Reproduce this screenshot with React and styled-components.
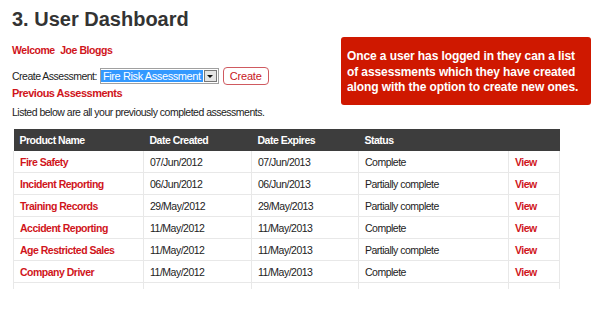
import React from 'react';
import styled, {createGlobalStyle} from 'styled-components';

const GlobalStyle = createGlobalStyle`
  body {
    margin: 0;
    background: #fff;
    font-family: "Liberation Sans", Arial, sans-serif;
    color: #222;
  }
`

const Page = styled.div`
  width: 600px;
  height: 330px;
  overflow: hidden;
  padding: 6px 0 0 12px;
  box-sizing: border-box;
`

const Title = styled.h1`
  margin: 0;
  font-size: 20px;
  font-weight: bold;
  color: #333;
  line-height: 26px;
`

const Top = styled.div`
  display: flex;
  justify-content: space-between;
  width: 579px;
`

const Left = styled.div`
  padding-top: 12px;
`

const Welcome = styled.div`
  font-size: 10.5px;
  font-weight: bold;
  color: #d0151b;
  line-height: 13px;
  letter-spacing: -0.45px;
  span { margin-left: 3px; }
`

const CreateRow = styled.div`
  display: flex;
  align-items: center;
  margin-top: 10px;
  font-size: 10.5px;
  letter-spacing: -0.5px;
  height: 18px;
`

const Select = styled.div`
  display: flex;
  align-items: center;
  margin-left: 3px;
  height: 14px;
  border: 1px solid #a0a0a0;
  background: #fff;
`

const Selected = styled.div`
  background: #3399ff;
  color: #fff;
  font-size: 11px;
  letter-spacing: -0.4px;
  line-height: 12px;
  padding: 0 2px;
`

const Arrow = styled.div`
  width: 13px;
  height: 12px;
  margin: 0 1px;
  background: #e4e4e4;
  border: 1px solid #777;
  box-sizing: border-box;
  display: flex;
  align-items: center;
  justify-content: center;
  &::after {
    content: '';
    border-left: 3px solid transparent;
    border-right: 3px solid transparent;
    border-top: 3px solid #111;
  }
`

const CreateButton = styled.button`
  margin-left: 4px;
  height: 18px;
  width: 46px;
  padding: 0;
  font-family: inherit;
  font-size: 11px;
  letter-spacing: -0.2px;
  color: #c8161d;
  background: #fff;
  border: 1px solid #cf5a60;
  border-radius: 4px;
`

const SubHeading = styled.div`
  font-size: 11px;
  font-weight: bold;
  color: #d0151b;
  line-height: 14px;
  letter-spacing: -0.5px;
  margin-top: 1px;
`

const Note = styled.p`
  margin: 6px 0 0;
  font-size: 10.5px;
  line-height: 13px;
  letter-spacing: -0.5px;
  color: #222;
`

const Callout = styled.div`
  margin-top: 5px;
  width: 250px;
  height: 68px;
  box-sizing: border-box;
  padding: 12px 6px 0;
  background: #cf1800;
  border-radius: 3px;
  color: #fff;
  font-size: 12px;
  font-weight: bold;
  line-height: 15.5px;
  letter-spacing: -0.1px;
`

const TableWrap = styled.div`
  margin: 10px 0 0 1px;
  width: 547px;
  height: 160px;
  overflow: hidden;
`

const Table = styled.table`
  width: 547px;
  border-collapse: collapse;
  font-size: 10.5px;
  letter-spacing: -0.5px;
`

const Th = styled.th`
  background: #3d3d3d;
  color: #fff;
  font-weight: bold;
  text-align: left;
  height: 22px;
  padding: 0 6px;
`

const Td = styled.td`
  height: 21px;
  padding: 0 6px;
  border: 1px solid #e8e8e8;
  border-top: none;
  color: ${p => (p.$link ? '#d0151b' : '#222')};
  font-weight: ${p => (p.$link ? 'bold' : 'normal')};
`

const rows = [
  ['Fire Safety', '07/Jun/2012', '07/Jun/2013', 'Complete'],
  ['Incident Reporting', '06/Jun/2012', '06/Jun/2013', 'Partially complete'],
  ['Training Records', '29/May/2012', '29/May/2013', 'Partially complete'],
  ['Accident Reporting', '11/May/2012', '11/May/2013', 'Complete'],
  ['Age Restricted Sales', '11/May/2012', '11/May/2013', 'Partially complete'],
  ['Company Driver', '11/May/2012', '11/May/2013', 'Complete'],
  ['', '', '', ''],
];

export default function App() {
  return (
    <Page>
      <GlobalStyle/>
      <Title>3. User Dashboard</Title>
      <Top>
        <Left>
          <Welcome>Welcome <span>Joe Bloggs</span></Welcome>
          <CreateRow>
            Create Assessment:
            <Select>
              <Selected>Fire Risk Assessment</Selected>
              <Arrow/>
            </Select>
            <CreateButton>Create</CreateButton>
          </CreateRow>
          <SubHeading>Previous Assessments</SubHeading>
          <Note>Listed below are all your previously completed assessments.</Note>
        </Left>
        <Callout>
          Once a user has logged in they can a list of assessments which they have created along with the option to create new ones.
        </Callout>
      </Top>
      <TableWrap>
        <Table>
          <thead>
          <tr>
            <Th style={{width: 118}}>Product Name</Th>
            <Th style={{width: 96}}>Date Created</Th>
            <Th style={{width: 95}}>Date Expires</Th>
            <Th style={{width: 138}}>Status</Th>
            <Th/>
          </tr>
          </thead>
          <tbody>
          {rows.map((r, i) =>
            <tr key={i}>
              <Td $link>{r[0]}</Td>
              <Td>{r[1]}</Td>
              <Td>{r[2]}</Td>
              <Td>{r[3]}</Td>
              <Td $link>{r[0] ? 'View' : ''}</Td>
            </tr>)}
          </tbody>
        </Table>
      </TableWrap>
    </Page>
  );
}
